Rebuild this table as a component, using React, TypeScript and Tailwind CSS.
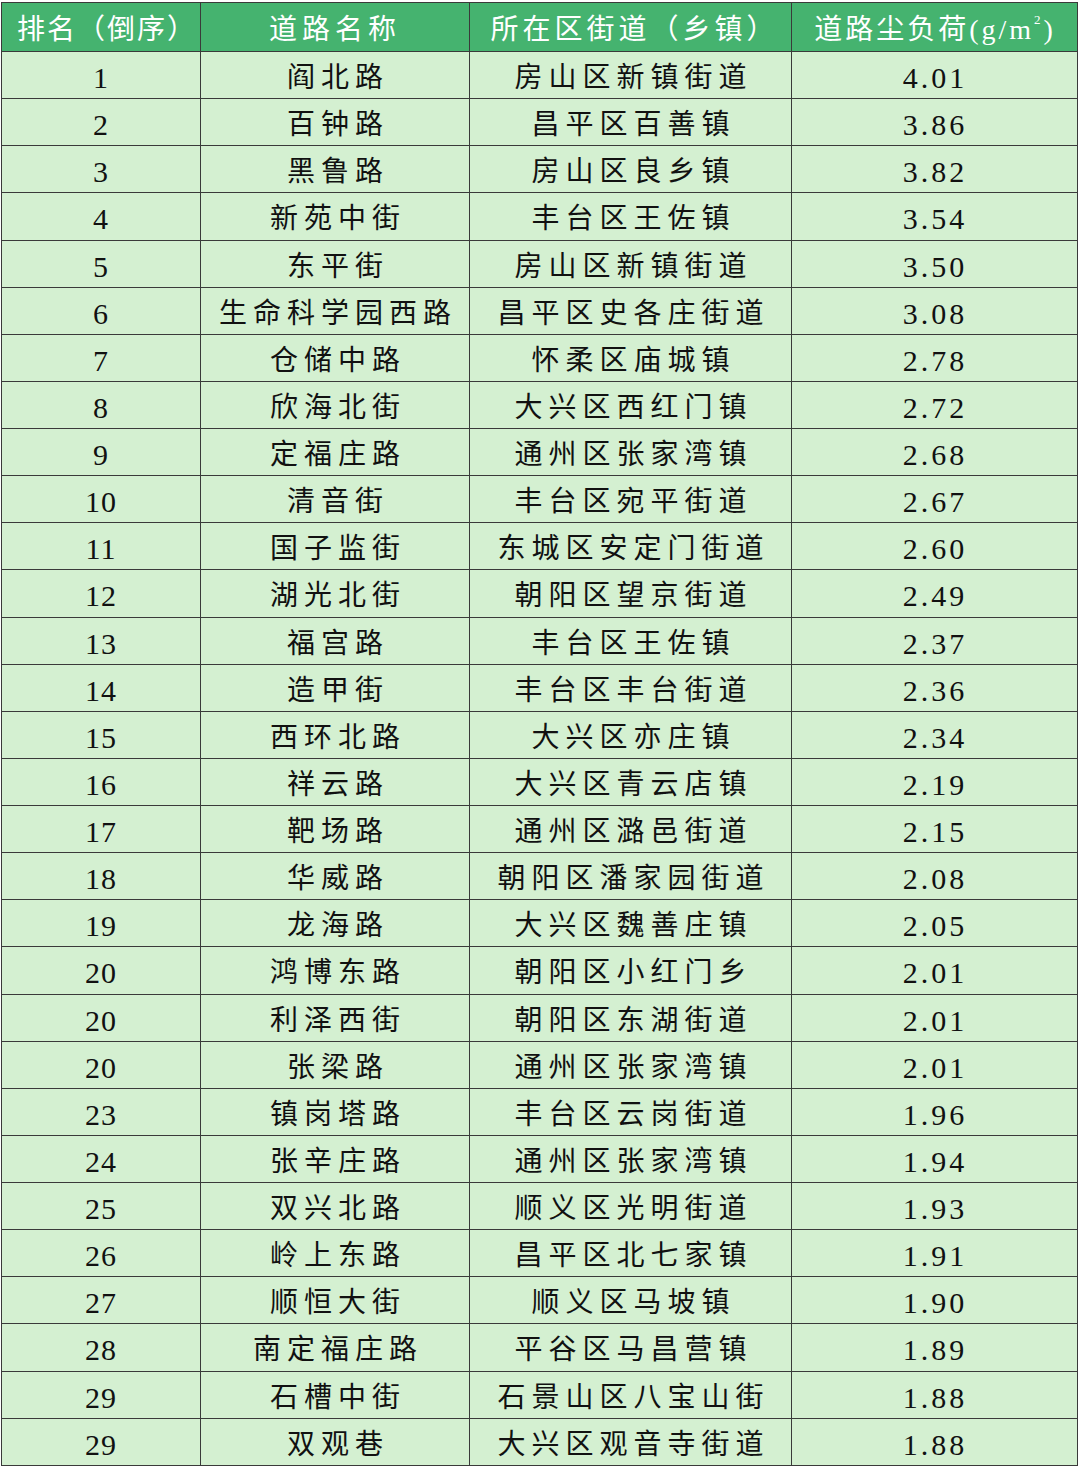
const rows: [string, string, string, string][] = [
  ["1", "阎北路", "房山区新镇街道", "4.01"],
  ["2", "百钟路", "昌平区百善镇", "3.86"],
  ["3", "黑鲁路", "房山区良乡镇", "3.82"],
  ["4", "新苑中街", "丰台区王佐镇", "3.54"],
  ["5", "东平街", "房山区新镇街道", "3.50"],
  ["6", "生命科学园西路", "昌平区史各庄街道", "3.08"],
  ["7", "仓储中路", "怀柔区庙城镇", "2.78"],
  ["8", "欣海北街", "大兴区西红门镇", "2.72"],
  ["9", "定福庄路", "通州区张家湾镇", "2.68"],
  ["10", "清音街", "丰台区宛平街道", "2.67"],
  ["11", "国子监街", "东城区安定门街道", "2.60"],
  ["12", "湖光北街", "朝阳区望京街道", "2.49"],
  ["13", "福宫路", "丰台区王佐镇", "2.37"],
  ["14", "造甲街", "丰台区丰台街道", "2.36"],
  ["15", "西环北路", "大兴区亦庄镇", "2.34"],
  ["16", "祥云路", "大兴区青云店镇", "2.19"],
  ["17", "靶场路", "通州区潞邑街道", "2.15"],
  ["18", "华威路", "朝阳区潘家园街道", "2.08"],
  ["19", "龙海路", "大兴区魏善庄镇", "2.05"],
  ["20", "鸿博东路", "朝阳区小红门乡", "2.01"],
  ["20", "利泽西街", "朝阳区东湖街道", "2.01"],
  ["20", "张梁路", "通州区张家湾镇", "2.01"],
  ["23", "镇岗塔路", "丰台区云岗街道", "1.96"],
  ["24", "张辛庄路", "通州区张家湾镇", "1.94"],
  ["25", "双兴北路", "顺义区光明街道", "1.93"],
  ["26", "岭上东路", "昌平区北七家镇", "1.91"],
  ["27", "顺恒大街", "顺义区马坡镇", "1.90"],
  ["28", "南定福庄路", "平谷区马昌营镇", "1.89"],
  ["29", "石槽中街", "石景山区八宝山街", "1.88"],
  ["29", "双观巷", "大兴区观音寺街道", "1.88"],
];

const cell =
  "flex items-center justify-center overflow-hidden leading-[32px] pt-[6px] border-r border-b border-[#3a3a3a] last:border-r-0";

const App = () => {
  return (
    <div
      className="w-[1080px] h-[1468px] bg-white pt-[2px] pl-[1px]"
      style={{ fontFamily: '"Liberation Serif", "Noto Sans CJK SC", serif' }}
    >
      <div className="w-[1077px] border-l border-t border-r border-[#3a3a3a]">
        <div className="grid grid-cols-[199px_269px_322px_286px] grid-rows-[49px] h-[49px] bg-[#45b36f] text-white text-[28px]">
          <div className={cell + " tracking-[2px] pl-[12px]"}>排名（倒序）</div>
          <div className={cell + " tracking-[5px]"}>道路名称</div>
          <div className={cell + " tracking-[4px] pl-[8px]"}>所在区街道（乡镇）</div>
          <div className={cell + " tracking-[3px]"}>
            道路尘负荷(g/m<sup className="text-[13px] -top-[10px]">2</sup>)
          </div>
        </div>
        {rows.map((r, i) => (
          <div
            key={i}
            className="grid grid-cols-[199px_269px_322px_286px] grid-rows-[47.13px] h-[47.13px] bg-[#d4f0d1] text-[#111] text-[28px]"
          >
            <div className={cell + " text-[30px] tracking-[1px]"}>{r[0]}</div>
            <div className={cell + " tracking-[6px] pl-[6px]"}>{r[1]}</div>
            <div className={cell + " tracking-[6px] pl-[6px]"}>{r[2]}</div>
            <div className={cell + " text-[30px] tracking-[3px]"}>{r[3]}</div>
          </div>
        ))}
      </div>
    </div>
  );
};

export default App;
